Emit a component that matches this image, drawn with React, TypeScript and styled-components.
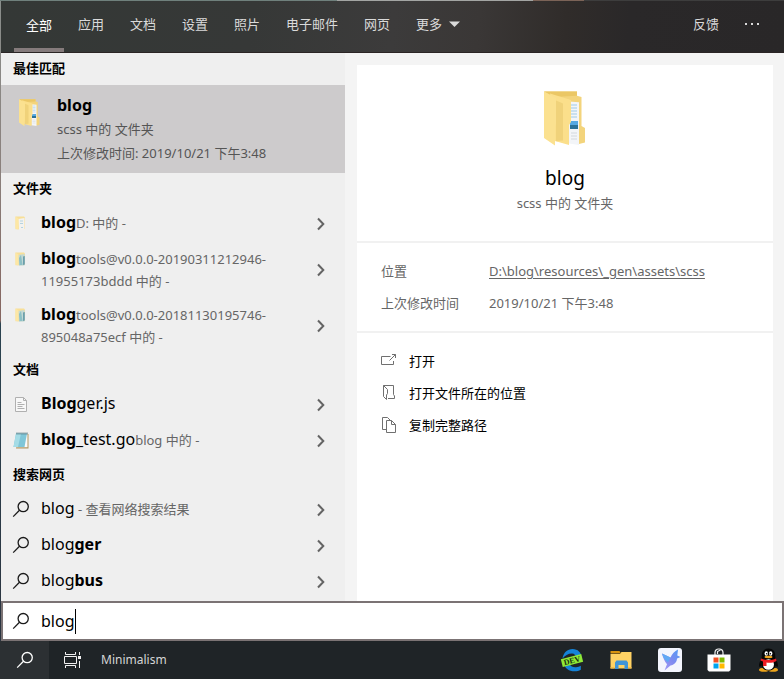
import React from "react";
import styled, { createGlobalStyle, css } from "styled-components";

const GlobalStyle = createGlobalStyle`
  *, *::before, *::after { box-sizing: border-box; }
  body { margin: 0; background: #1f2427; }
  body, button, input {
    font-family: "Noto Sans", "Noto Sans CJK SC", sans-serif;
    font-size: 13px;
    line-height: 22px;
    color: #000;
  }
  button, input { border: 0; padding: 0; background: none; }
  a { color: inherit; text-decoration: none; }
  svg { display: block; flex: none; }
`;

const Screen = styled.div`
  min-height: 100vh;
  display: flex;
  flex-direction: column;
`;

const SearchWindow = styled.main`
  flex: 1;
  display: flex;
  flex-direction: column;
  padding: 1px 0 0 1px;
  background:
    linear-gradient(90deg, #6f807c 0 43%, #a3a5a3 43% 68%, #7b6357 68% 74.5%, #3d3d3d 74.5%) 0 0 / 100% 1px no-repeat,
    linear-gradient(180deg, #8a8f8c 0, #8a7f7b 28%, #85655f 50%, #2a4350 50.5%, #2b3440 100%);
`;

const Header = styled.header`
  display: flex;
  justify-content: space-between;
  height: 52px;
  padding: 0 10px 0 12px;
  background: linear-gradient(95deg, #343836 0%, #363837 32%, #3c3b3b 50%, #3a3736 61%, #302c2a 72%, #2a2829 80%, #292728 100%);
  border-bottom: 1px solid #2b2525;
`;

const TabList = styled.nav`
  display: flex;
`;

const Tab = styled.button<{ $active?: boolean }>`
  position: relative;
  display: flex;
  align-items: center;
  gap: 7px;
  padding: 0 13px ${(p) => (p.$active ? "3px" : "5px")};
  white-space: nowrap;
  color: ${(p) => (p.$active ? "#fff" : "#dadada")};
  ${(p) =>
    p.$active &&
    css`
      &::after {
        content: "";
        position: absolute;
        inset: auto 1px 0;
        height: 4px;
        background: #857b7c;
      }
    `}
`;

const Body = styled.div`
  flex: 1;
  display: grid;
  grid-template-columns: 344px 1fr;
`;

const Results = styled.section`
  background: #efefef;
`;

const SectionTitle = styled.h2`
  margin: 0;
  padding: 4px 12px 6px;
  font-size: 13px;
  line-height: 22px;
  font-weight: 700;
`;

const ResultList = styled.ul`
  list-style: none;
  margin: 0;
  padding: 1px 0 0;
`;

const ResultRow = styled.li`
  display: flex;
  min-height: 36px;
`;

const ResultLink = styled.a`
  flex: 1;
  display: flex;
  gap: 10px;
  padding: 6px 0 6px 10px;
`;

const IconSlot = styled.span`
  flex: none;
  display: flex;
  align-items: center;
  justify-content: center;
  width: 20px;
  height: 22px;
`;

const ResultText = styled.span`
  flex: 1;
`;

const Name = styled.span`
  font-size: 16px;
  line-height: 18px;
  & > b { font-weight: 700; }
`;

const Note = styled.span`
  color: #666;
`;

const ExpandButton = styled.button`
  display: flex;
  align-items: center;
  justify-content: center;
  width: 48px;
`;

const BestMatch = styled.a`
  display: flex;
  gap: 12px;
  padding: 8px 12px;
  background: #cdcbcc;
  line-height: 24px;
`;

const BestIcon = styled.span`
  flex: none;
  display: flex;
  justify-content: center;
  width: 32px;
  padding-top: 6px;
`;

const BestText = styled.span`
  display: flex;
  flex-direction: column;
  color: #555;
`;

const BestName = styled.b`
  font-size: 16px;
  color: #000;
`;

const DetailArea = styled.section`
  display: flex;
  padding: 12px 11px 0 12px;
  background: #f4f4f4;
`;

const Card = styled.article`
  flex: 1;
  background: #fff;
`;

const Hero = styled.div`
  display: flex;
  flex-direction: column;
  align-items: center;
  padding: 26px 24px;
  border-bottom: 2px solid #f1f1f1;
  line-height: 24px;
`;

const HeroTitle = styled.h1`
  margin: 18px 0 0;
  font-size: 19px;
  line-height: 26px;
  font-weight: 400;
`;

const Facts = styled.dl`
  display: grid;
  grid-template-columns: 108px 1fr;
  margin: 0;
  padding: 12px 24px;
  border-bottom: 2px solid #f1f1f1;
  line-height: 32px;
  color: #666;
  & > dd { margin: 0; }
  & a { text-decoration: underline; text-underline-offset: 2px; }
`;

const Actions = styled.div`
  display: flex;
  flex-direction: column;
  align-items: flex-start;
  padding: 12px 24px;
`;

const Action = styled.button`
  display: flex;
  align-items: center;
  gap: 12px;
  height: 32px;
`;

const SearchBox = styled.label`
  display: flex;
  align-items: center;
  gap: 10px;
  height: 40px;
  padding: 0 8px;
  background: #fff;
  border: 2px solid #7b7374;
`;

const SearchField = styled.span`
  display: flex;
  align-items: center;
`;

const SearchInput = styled.input`
  field-sizing: content;
  font-size: 16px;
  outline: none;
  caret-color: transparent;
`;

const Caret = styled.span`
  width: 1px;
  height: 25px;
  background: #000;
`;

const Taskbar = styled.footer`
  display: flex;
  height: 38px;
  background: #1f2427;
`;

const TaskButton = styled.button<{ $active?: boolean }>`
  display: flex;
  align-items: center;
  justify-content: center;
  width: 49px;
  background: ${(p) => (p.$active ? "#2c3033" : "transparent")};
`;

const ToolbarName = styled.button`
  margin-left: 3px;
  font-size: 12px;
  color: #d5d6d6;
`;

const PinnedApps = styled.div`
  display: flex;
  align-items: center;
  gap: 25px;
  margin-left: auto;
  padding-right: 4px;
`;

const SearchIcon = ({ color = "#1a1a1a" }: { color?: string }) => (
  <svg width="18" height="18" viewBox="0 0 18 18" fill="none" stroke={color} strokeWidth="1.3">
    <circle cx="11.2" cy="6.6" r="5.1" />
    <path d="M7.5 10.3 1.2 16.6" />
  </svg>
);

const Chevron = () => (
  <svg width="10" height="14" viewBox="0 0 10 14" fill="none" stroke="#646464" strokeWidth="2">
    <path d="m2 1.5 5.3 5.5L2 12.5" />
  </svg>
);

const FolderIcon = ({ width, height }: { width: number; height: number }) => (
  <svg width={width} height={height} viewBox="0 0 42 56">
    <path d="M0 .5h33v4.300l4.500 1.200v29l3.500 2v14.500L35 53 11 50Z" fill="#f3d47c" />
    <path d="M0 .5h33v4.300L10 6Z" fill="#ebc765" />
    <path d="m25 10.500 10 .8V54l-10-1.500Z" fill="#f3f5f8" />
    <path d="M27 14h6M27 17h6M27 20h6M27 23h6M27 26h6" stroke="#9fcbe8" />
    <path d="M27 42h6M27 45h6M27 48h6" stroke="#d3d8dd" />
    <path d="M26 30h8v4h-8Z" fill="#55a9e2" />
    <path d="M26 34h8v4h-8Z" fill="#2a7298" />
    <path d="m6 2.500 21 6.500v22l-2 3v20l-14-4Z" fill="#fbdf8b" />
    <path d="m12 9.500 7 3v37l-7 .5Z" fill="#f0d27a" />
    <path d="M0 .5 12 7v26l-1 2v19.500L0 47Z" fill="#fbe190" />
  </svg>
);

const SmallFolderIcon = ({ tinted }: { tinted?: boolean }) => (
  <svg width="12" height="14" viewBox="0 0 12 14">
    <path d="M.5 .5H9l1 1V13L.5 13.200Z" fill="#f8df98" />
    <path d="M3.300 3 9.500 2v11.500l-5.500 .3Z" fill={tinted ? "#c3d9d4" : "#f3f2ef"} />
    <path d="M.5 .5 3.500 2.500v11.300L.5 12.500Z" fill="#fde7a5" />
    {tinted ? (
      <>
        <path d="m4 6 2-3 1.500 10H4.500Z" fill="#8cc0c6" />
        <path d="M8 4.500 9.800 4v8.500L8 13Z" fill="#6b9fae" />
      </>
    ) : (
      <path d="M5 5h3M5 7.500h3M6 11.500h2" stroke="#b5d3e0" />
    )}
  </svg>
);

const DocumentIcon = () => (
  <svg width="12" height="15" viewBox="0 0 12 15" fill="none" stroke="#b0b0b0">
    <path d="M.5 .5h8l3 3v11H.5Z" fill="#f8f8f8" />
    <path d="M8.500 .5v3h3M2.500 5.500h4M2.500 7.500h7M2.500 9.500h5M2.500 11.500h7" />
  </svg>
);

const NotepadIcon = () => (
  <svg width="16" height="17" viewBox="0 0 16 17">
    <path d="M4 2h11.500v14.500H3Z" fill="#b29763" />
    <path d="M4 2h10.500v13.300H3Z" fill="#fafafa" />
    <path d="M3 1.500h11L11.500 15H.5Z" fill="#7fc6d8" />
    <path d="M3 1.500h5L5 15H.5Z" fill="#a5dce6" />
    <path d="M4 .5v2M6 .5v2M8 .5v2M10 .5v2M12 .5v2M14 .5v2" stroke="#486c77" />
  </svg>
);

const OpenIcon = () => (
  <svg width="16" height="16" viewBox="0 0 16 16" fill="none" stroke="#707070">
    <path d="M9.500 3.500H.5v8h12V8M8.500 7.500l6-6M11 1.500h3.500V5" />
  </svg>
);

const LocationIcon = () => (
  <svg width="16" height="16" viewBox="0 0 16 16" fill="none" stroke="#707070">
    <path d="M2.500 .5h10v9l1 1.500v2.500H7M2.500 .5v11l3 3V10l1-1.500V4.500L2.500 .5" />
  </svg>
);

const CopyIcon = () => (
  <svg width="16" height="16" viewBox="0 0 16 16" fill="none" stroke="#707070">
    <path d="M5 12.500H1.500V.5h5l3 3M5.500 3.500h5l4 4v8h-9ZM10.500 3.500v4h4" />
  </svg>
);

const TaskViewIcon = () => (
  <svg width="19" height="16" viewBox="0 0 19 16" fill="none" stroke="#f2f2f2">
    <path d="M1.500 0v2.500h10V0M1.500 16v-2.500h10V16M.5 4.500h12v7H.5ZM15.500 0v3M15.500 9v7" />
    <path d="M14 4h3v3h-3Z" fill="#f2f2f2" stroke="none" />
  </svg>
);

const EdgeDevIcon = () => (
  <svg width="24" height="24" viewBox="0 0 24 24">
    <path
      d="M2.500 10.500C3.500 4.500 7.500 1 12.500 1c5.500 0 8.700 3.500 9 8.500l-5 1C16 7.500 14.500 5.500 12 5.500c-4 0-7 2-9.500 5ZM4 16l5-1c1 3 3.500 4.500 7 4.300 2-.1 3.500-.6 4.800-1.500v4C19 22.800 17 23.300 14.500 23.300 9 23.300 5 20.500 4 16Z"
      fill="#1583d8"
    />
    <g transform="rotate(-14 12 12.5)">
      <rect x="1.500" y="8.500" width="21" height="8" fill="#8fe936" />
      <text x="12" y="15.200" textAnchor="middle" fontFamily="Liberation Serif, serif" fontWeight="700" fontSize="8" fill="#173010">
        DEV
      </text>
    </g>
  </svg>
);

const ExplorerIcon = () => (
  <svg width="24" height="24" viewBox="0 0 24 24">
    <path d="M1.500 3h9l1.500 2.500H1.500Z" fill="#d9940f" />
    <path d="M1.500 6H11l1.500-2H22.500v16.500h-21Z" fill="#ffd264" />
    <path d="M6 21v-6.500L7.500 12.500h10l1.500 2V21h-3.500v-4h-6v4Z" fill="#4095d8" />
    <path d="M1.500 19h4v1.500h-4ZM19 19h3.500v1.500H19Z" fill="#f6bd48" />
  </svg>
);

const BirdIcon = () => (
  <svg width="24" height="24" viewBox="0 0 24 24">
    <defs>
      <linearGradient id="bird" x1="1" y1="0" x2="0" y2="1">
        <stop offset="0" stopColor="#4d9cf5" />
        <stop offset=".5" stopColor="#7f8af0" />
        <stop offset="1" stopColor="#a99df5" />
      </linearGradient>
    </defs>
    <rect width="24" height="24" rx="3" fill="#f3f5fd" />
    <path d="M4 5.500 12.500 9.500C14 6 16.500 3 20 1.500L19.300 7.500 22.500 9 19 10.500C18.800 14.500 16 17 12.500 17.500L6.500 22.500 9 16.300C6.500 13.500 5 9.500 4 5.500Z" fill="url(#bird)" />
    <path d="m4 5.500 8.500 4-2.500 5C7 12.500 5 9.500 4 5.500Z" fill="#61a9f4" />
  </svg>
);

const StoreIcon = () => (
  <svg width="24" height="24" viewBox="0 0 24 24">
    <path d="M8 7V4.500A3.500 3.500 0 0 1 11.500 1h1A3.500 3.500 0 0 1 16 4.500V7M10.500 6V3.500l3-1.500" fill="none" stroke="#f0f0f0" strokeWidth="1.200" />
    <path d="M.5 6.500h23V22l-1.500 1.500H2L.5 22Z" fill="#fff" />
    <path d="M6.500 9.500h5v5h-5Z" fill="#f25022" />
    <path d="M12.500 9.500h5v5h-5Z" fill="#7fba00" />
    <path d="M6.500 15.500h5v5h-5Z" fill="#00a4ef" />
    <path d="M12.500 15.500h5v5h-5Z" fill="#ffb900" />
  </svg>
);

const PenguinIcon = () => (
  <svg width="24" height="24" viewBox="0 0 24 24">
    <ellipse cx="8" cy="21.800" rx="5" ry="2" fill="#eda51c" />
    <ellipse cx="17" cy="21.800" rx="5" ry="2" fill="#eda51c" />
    <path d="M12.500 .5c4.500 0 6.700 3 6.700 7 0 2 .3 3 1.300 5 1.300 2.500 1.800 5 1 6.500-.7 0-1.300-.7-1.800-1.500C19 20.500 16 22.500 12.500 22.500S6 20.500 5.300 17.500C4.800 18.300 4.200 19 3.500 19c-.8-1.500-.3-4 1-6.500 1-2 1.300-3 1.300-5 0-4 2.200-7 6.700-7Z" fill="#060606" />
    <ellipse cx="12.500" cy="16.500" rx="5.500" ry="5.300" fill="#fff" />
    <ellipse cx="10.300" cy="5.500" rx="1.700" ry="2.200" fill="#fff" />
    <ellipse cx="14.700" cy="5.500" rx="1.700" ry="2.200" fill="#fff" />
    <circle cx="10.700" cy="5.800" r=".8" />
    <circle cx="14.300" cy="5.800" r=".8" />
    <ellipse cx="12.500" cy="9" rx="4" ry="1.200" fill="#f0a51d" />
    <path d="M5 10.500c4.500 2 10.500 2 15 0l.5 2.500C17 15 13 15 10.500 14.500v3.500H7V13.500L4.500 12.500Z" fill="#ec1c24" />
  </svg>
);

type Result = { icon: React.ReactNode; name: React.ReactNode; note?: string };

const ResultSection = ({ title, items }: { title: string; items: Result[] }) => (
  <>
    <SectionTitle>{title}</SectionTitle>
    <ResultList>
      {items.map((item, i) => (
        <ResultRow key={i}>
          <ResultLink href="#">
            <IconSlot>{item.icon}</IconSlot>
            <ResultText>
              <Name>{item.name}</Name>
              {item.note && <Note>{item.note}</Note>}
            </ResultText>
          </ResultLink>
          <ExpandButton aria-label="展开">
            <Chevron />
          </ExpandButton>
        </ResultRow>
      ))}
    </ResultList>
  </>
);

const tabs = ["全部", "应用", "文档", "设置", "照片", "电子邮件", "网页"];

const folders: Result[] = [
  { icon: <SmallFolderIcon />, name: <b>blog</b>, note: "D: 中的 -" },
  { icon: <SmallFolderIcon tinted />, name: <b>blog</b>, note: "tools@v0.0.0-20190311212946-11955173bddd 中的 -" },
  { icon: <SmallFolderIcon tinted />, name: <b>blog</b>, note: "tools@v0.0.0-20181130195746-895048a75ecf 中的 -" },
];

const documents: Result[] = [
  { icon: <DocumentIcon />, name: <><b>Blog</b>ger.js</> },
  { icon: <NotepadIcon />, name: <><b>blog</b>_test.go</>, note: "blog 中的 -" },
];

const web: Result[] = [
  { icon: <SearchIcon />, name: "blog", note: " - 查看网络搜索结果" },
  { icon: <SearchIcon />, name: <>blog<b>ger</b></> },
  { icon: <SearchIcon />, name: <>blog<b>bus</b></> },
];

const actions = [
  { icon: <OpenIcon />, label: "打开" },
  { icon: <LocationIcon />, label: "打开文件所在的位置" },
  { icon: <CopyIcon />, label: "复制完整路径" },
];

export default function App() {
  return (
    <Screen>
      <GlobalStyle />
      <SearchWindow>
        <Header>
          <TabList>
            {tabs.map((tab, i) => (
              <Tab key={tab} $active={i === 0}>{tab}</Tab>
            ))}
            <Tab>
              更多
              <svg width="11" height="6" viewBox="0 0 11 6"><path d="M0 .5h11L5.500 6Z" fill="#dadada" /></svg>
            </Tab>
          </TabList>
          <TabList>
            <Tab>反馈</Tab>
            <Tab aria-label="更多选项">
              <svg width="16" height="2" viewBox="0 0 16 2"><path d="M0 0h2v2H0ZM6 0h2v2H6ZM12 0h2v2h-2Z" fill="#dadada" /></svg>
            </Tab>
          </TabList>
        </Header>
        <Body>
          <Results>
            <SectionTitle>最佳匹配</SectionTitle>
            <BestMatch href="#">
              <BestIcon><FolderIcon width={21} height={28} /></BestIcon>
              <BestText>
                <BestName>blog</BestName>
                <span>scss 中的 文件夹</span>
                <span>上次修改时间: 2019/10/21 下午3:48</span>
              </BestText>
            </BestMatch>
            <ResultSection title="文件夹" items={folders} />
            <ResultSection title="文档" items={documents} />
            <ResultSection title="搜索网页" items={web} />
          </Results>
          <DetailArea>
            <Card>
              <Hero>
                <FolderIcon width={42} height={56} />
                <HeroTitle>blog</HeroTitle>
                <Note>scss 中的 文件夹</Note>
              </Hero>
              <Facts>
                <dt>位置</dt>
                <dd><a href="#">D:\blog\resources\_gen\assets\scss</a></dd>
                <dt>上次修改时间</dt>
                <dd>2019/10/21 下午3:48</dd>
              </Facts>
              <Actions>
                {actions.map((a) => (
                  <Action key={a.label}>{a.icon}{a.label}</Action>
                ))}
              </Actions>
            </Card>
          </DetailArea>
        </Body>
        <SearchBox>
          <IconSlot><SearchIcon /></IconSlot>
          <SearchField>
            <SearchInput type="text" aria-label="搜索" defaultValue="blog" />
            <Caret />
          </SearchField>
        </SearchBox>
      </SearchWindow>
      <Taskbar>
        <TaskButton $active aria-label="搜索"><SearchIcon color="#fff" /></TaskButton>
        <TaskButton aria-label="任务视图"><TaskViewIcon /></TaskButton>
        <ToolbarName>Minimalism</ToolbarName>
        <PinnedApps>
          <button aria-label="Edge Dev"><EdgeDevIcon /></button>
          <button aria-label="文件资源管理器"><ExplorerIcon /></button>
          <button aria-label="Bird"><BirdIcon /></button>
          <button aria-label="Microsoft Store"><StoreIcon /></button>
          <button aria-label="QQ"><PenguinIcon /></button>
        </PinnedApps>
      </Taskbar>
    </Screen>
  );
}
